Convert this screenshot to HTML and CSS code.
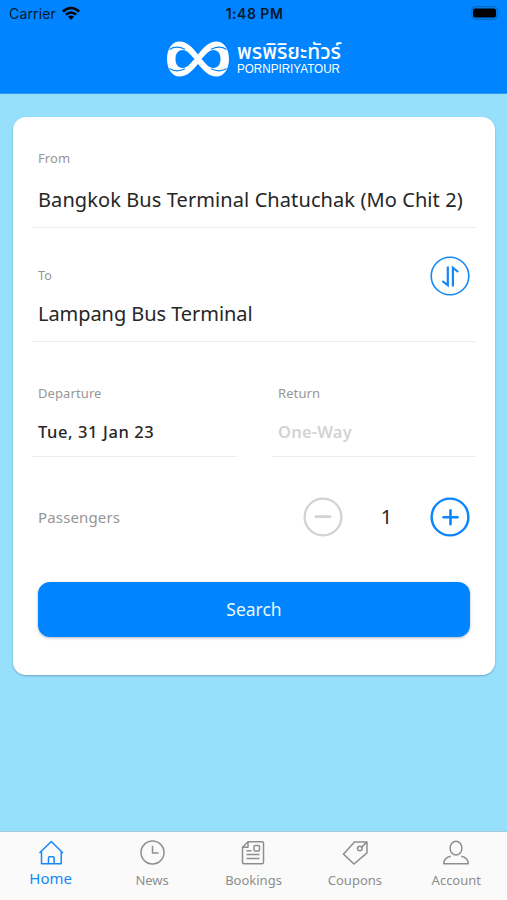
FILE: index.html
```html
<!DOCTYPE html>
<html lang="en">
<head>
<meta charset="utf-8">
<meta name="viewport" content="width=device-width, initial-scale=1">
<title>Pornpiriyatour</title>
<link rel="stylesheet" href="styles.css">
</head>
<body>
<div class="app">
  <header class="header">
    <div class="status">
      <div class="carrier"><span>Carrier</span>
        <svg width="18" height="14" viewBox="0 0 18 14"><path d="M0 4.6Q9-3.3 18 4.6L16.2 6.5Q9 .2 1.8 6.5ZM3 7.7Q9 2.6 15 7.7L13.2 9.5Q9 6 4.8 9.5ZM6 10.7Q9 8.3 12 10.7L9 13.8Z"/></svg>
      </div>
      <time class="clock">1:48 PM</time>
      <svg class="battery" width="30" height="14" viewBox="0 0 30 14"><rect x=".7" y=".7" width="25.6" height="12.6" rx="4" fill="none" stroke="#0568bd" stroke-width="1.2"/><rect x="2" y="2.5" width="23" height="9" rx="2.2"/><path d="M28 5v4q1.5-2 0-4Z" fill="#0568bd"/></svg>
    </div>
    <div class="brand">
      <svg class="mark" width="62" height="36" viewBox="0 0 62 36">
        <path fill="#fff" fill-rule="evenodd" d="M31 13.500C25 6 20 .5 12.500 .5C5 .5 0 8 0 18S5 35.500 12.500 35.500C20 35.500 25 30 31 23C37 30 42 35.500 49.500 35.500C57 35.500 62 28 62 18S57 .5 49.500 .5C42 .5 37 6 31 13.500ZM27.500 18C23 23 20 27 15.500 27C11 27 8.500 23.500 8.500 18S11 9 15.500 9C20 9 23 13 27.500 18ZM34.500 18C39 13 42 9 46.500 9C51 9 53.500 12.500 53.500 18S51 27 46.500 27C42 27 39 23 34.500 18Z"/>
        <path fill="none" stroke="#0084ff" stroke-width="1.100" d="M2.500 8.500Q9 4 18 8.200M2.500 27.500Q9 32 18 27.800M59.500 8.500Q53 4 44 8.200M59.500 27.500Q53 32 44 27.800"/>
      </svg>
      <svg class="wordmark" width="106" height="38" viewBox="0 0 106 38"><text class="thai" x="1" y="19.500" textLength="104" lengthAdjust="spacingAndGlyphs">พรพิริยะทัวร์</text><text class="latin" x="1" y="34" textLength="103" lengthAdjust="spacingAndGlyphs">PORNPIRIYATOUR</text></svg>
    </div>
  </header>
  <main class="main">
    <section class="card">
      <div class="field from"><span class="label">From</span><span class="place origin">Bangkok Bus Terminal Chatuchak (Mo Chit 2)</span></div>
      <div class="field to">
        <div class="to-text"><span class="label small">To</span><span class="place dest">Lampang Bus Terminal</span></div>
        <button class="round" aria-label="Swap"><svg width="40" height="40" viewBox="0 0 40 40" fill="none" stroke="#1687f8"><circle cx="20" cy="20" r="18.8" stroke-width="1.6"/><path d="M17.800 10.500v18.700L12.300 25M22.900 30.500V11.700L28.200 16" stroke-width="2.200"/></svg></button>
      </div>
      <div class="dates">
        <div class="field"><span class="label">Departure</span><span class="date">Tue, 31 Jan 23</span></div>
        <div class="field"><span class="label">Return</span><span class="date empty">One-Way</span></div>
      </div>
      <div class="passengers">
        <span class="plabel">Passengers</span>
        <div class="stepper">
          <button class="round" aria-label="Fewer"><svg width="40" height="40" viewBox="0 0 40 40" fill="none" stroke="#d2d2d2" stroke-width="2.3"><circle cx="20" cy="20" r="18.4"/><path d="M13 19.700h14" stroke-width="2.800" stroke-linecap="round"/></svg></button>
          <span class="count">1</span>
          <button class="round" aria-label="More"><svg width="40" height="40" viewBox="0 0 40 40" fill="none" stroke="#0a84ff" stroke-width="2.4"><circle cx="20" cy="20" r="18.4"/><path d="M13.500 20.300h14M20.500 13.300v14" stroke-width="2.600" stroke-linecap="round"/></svg></button>
        </div>
      </div>
      <button class="search">Search</button>
    </section>
  </main>
  <nav class="tabs">
    <a class="tab active"><svg width="28" height="28" viewBox="0 0 28 28"><path d="M4.500 12V24.800H24.200V12M2.500 14 14.300 2.500 26 14M11.500 24.800v-6q0-1 1-1h3.600q1 0 1 1v6"/></svg><span>Home</span></a>
    <a class="tab news"><svg width="28" height="28" viewBox="0 0 28 28"><circle cx="14.500" cy="13.500" r="11.500"/><path d="M14.500 6.700V14h6"/></svg><span>News</span></a>
    <a class="tab bookings"><svg width="28" height="28" viewBox="0 0 28 28"><path d="M9 2.700h14q1.500 0 1.500 1.500v19.100q0 1.500-1.500 1.500H5q-1.500 0-1.500-1.500V8.200ZM9 2.700v5.500H3.500M7.500 11.700h5M7.500 15.500h13M7.500 19.500h13"/><rect x="15" y="6.500" width="5.500" height="5.500" rx="1"/></svg><span>Bookings</span></a>
    <a class="tab coupons"><svg width="28" height="28" viewBox="0 0 28 28"><path d="m2.500 15.100 11-12H26v10.800L13 25ZM26 3.100l-5.500 5"/><circle cx="18.800" cy="9.500" r="2.300"/></svg><span>Coupons</span></a>
    <a class="tab account"><svg width="28" height="28" viewBox="0 0 28 28"><ellipse cx="14" cy="9.200" rx="5.900" ry="6.900"/><path d="M8.800 17.200Q2 18.500 1.800 24.700H26.200Q26 18.500 19.200 17.200"/></svg><span>Account</span></a>
  </nav>
</div>
</body>
</html>
```
FILE: styles.css
```css
* { box-sizing: border-box; }
body { margin: 0; font-family: "Noto Sans", sans-serif; color: #262626; }
button { border: 0; padding: 0; background: none; font: inherit; }
svg { display: block; flex: none; }
span { white-space: nowrap; }
.app { height: 900px; display: flex; flex-direction: column; background: #97e0fc; }
.header { height: 94px; background: #0084ff; border-bottom: 1px solid #2b9cf0; }
.status { height: 28px; padding: 0 6px 0 9px; display: grid; grid-template-columns: 1fr auto 1fr; align-items: center; font-family: Inter, sans-serif; font-size: 14px; color: #06182d; }
.carrier { display: flex; align-items: center; gap: 6px; letter-spacing: .15px; margin-top: -1px; }
.carrier svg { margin-top: -2px; }
.clock { font-weight: 600; font-size: 14px; letter-spacing: .5px; margin: -1px 1px 0 0; }
.battery { justify-self: end; margin-top: -2px; }
.brand { display: flex; padding: 13px 0 0 167px; gap: 7px; }
.wordmark { margin-top: -2px; }
.wordmark text { fill: #fff; }
.thai { font: 500 21px "Noto Sans Thai", "Noto Sans", sans-serif; }
.latin { font: 12px "Liberation Sans", sans-serif; }
.main { flex: 1; padding: 23px 12px 0 13px; }
.card { height: 558px; padding: 0 19px; background: #fff; border-radius: 13px; box-shadow: 0 1px 2px rgba(35, 80, 100, .4); display: flex; flex-direction: column; }
.field { display: flex; flex-direction: column; padding: 0 6px; border-bottom: 1px solid #ececec; }
.label { font-size: 13px; line-height: 20px; color: #969696; letter-spacing: .1px; }
.small { font-size: 12.5px; }
.place { font-size: 20px; line-height: 30px; }
.from { height: 111px; padding-top: 31px; }
.origin { margin-top: 17px; letter-spacing: .09px; }
.to { height: 114px; flex-direction: row; justify-content: space-between; padding-top: 28px; }
.to-text { display: flex; flex-direction: column; padding-top: 10px; }
.dest { margin-top: 13px; letter-spacing: -.06px; }
.round { width: 40px; height: 40px; }
.dates { height: 115px; display: grid; grid-template-columns: 1fr 1fr; gap: 35px; }
.dates .field { padding-top: 41px; }
.dates .field + .field { padding-left: 6.5px; }
.date { font-size: 16.5px; line-height: 24px; margin-top: 17px; font-weight: 500; letter-spacing: .6px; }
.empty { color: #d3d3d3; font-weight: 600; letter-spacing: .2px; }
.passengers { height: 120px; padding: 0 6px; display: flex; justify-content: space-between; align-items: center; }
.plabel { font-size: 15px; color: #969696; letter-spacing: .15px; }
.stepper { display: flex; align-items: center; }
.count { width: 87px; text-align: center; font-size: 20px; line-height: 30px; }
.search { height: 55px; margin: 5px 6px 0; padding-bottom: 2px; border-radius: 12px; background: #0084ff; color: #e8faff; font-size: 17.5px; box-shadow: 0 1px 3px rgba(0, 20, 80, .3); }
.tabs { height: 69px; background: #fafafa; border-top: 1px solid #a4cbdc; display: grid; grid-template-columns: repeat(5, 1fr); }
.tab { display: flex; flex-direction: column; align-items: center; padding-top: 7px; font-size: 13px; color: #8e8e8e; }
.tab svg { fill: none; stroke: currentColor; stroke-width: 1.5; stroke-linejoin: round; }
.tab span { line-height: 20px; margin-top: 3px; }
.tab.active { color: #1687f8; font-size: 15px; }
.tab.active span { margin-top: 1px; }
```
